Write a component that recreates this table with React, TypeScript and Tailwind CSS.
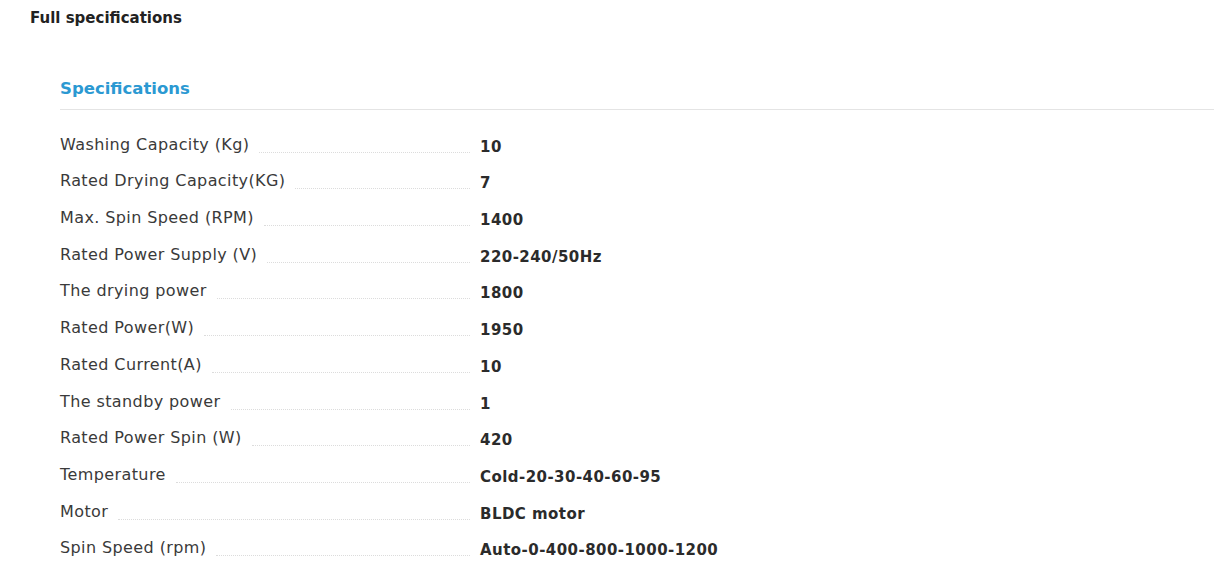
import React from 'react';

const specs: { label: string; value: string }[] = [
    { label: 'Washing Capacity (Kg)', value: '10' },
    { label: 'Rated Drying Capacity(KG)', value: '7' },
    { label: 'Max. Spin Speed (RPM)', value: '1400' },
    { label: 'Rated Power Supply (V)', value: '220-240/50Hz' },
    { label: 'The drying power', value: '1800' },
    { label: 'Rated Power(W)', value: '1950' },
    { label: 'Rated Current(A)', value: '10' },
    { label: 'The standby power', value: '1' },
    { label: 'Rated Power Spin (W)', value: '420' },
    { label: 'Temperature', value: 'Cold-20-30-40-60-95' },
    { label: 'Motor', value: 'BLDC motor' },
    { label: 'Spin Speed (rpm)', value: 'Auto-0-400-800-1000-1200' },
];

const SpecRow: React.FC<{ label: string; value: string }> = ({ label, value }) => (
    <div className="flex items-end h-[36.7px]">
        <div className="flex items-end w-[410px]">
            <span className="text-[16px] leading-[20px] tracking-[0.4px] text-[#3a3a3a]">{label}</span>
            <span className="flex-1 ml-[10px] mb-[2px] border-b border-dotted border-[#dcdcdc]" />
        </div>
        <span className="ml-[10px] text-[15px] leading-[20px] tracking-[0.45px] font-bold text-[#2b2b2b] translate-y-[2px]">
            {value}
        </span>
    </div>
);

const App: React.FC = () => {
    return (
        <div className="bg-white w-[1231px] h-[566px] overflow-hidden" style={{ fontFamily: '"DejaVu Sans", Arial, sans-serif' }}>
            <div className="pl-[30px] pt-[8px]">
                <h2 className="text-[15px] leading-[20px] font-bold text-[#222]">Full specifications</h2>
            </div>
            <div className="ml-[60px] mr-[17px] mt-[50px]">
                <h3 className="text-[16.5px] leading-[22px] font-bold text-[#2b99d2] pb-[9px] border-b border-[#e4e4e4]">
                    Specifications
                </h3>
                <div className="pt-[8px]">
                    {specs.map((s) => (
                        <SpecRow key={s.label} label={s.label} value={s.value} />
                    ))}
                </div>
            </div>
        </div>
    );
};

export default App;
